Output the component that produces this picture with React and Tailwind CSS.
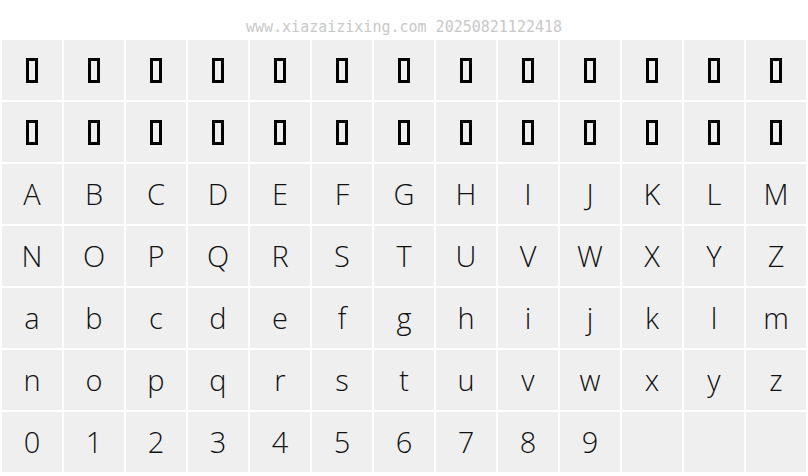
import React from 'react';

const letters = [
  ...'ABCDEFGHIJKLMNOPQRSTUVWXYZ'.split(''),
  ...'abcdefghijklmnopqrstuvwxyz'.split(''),
  ...'0123456789'.split(''),
];

const Tofu = () => (
  <span className="block w-[12px] h-[25px] border-[3px] border-black" />
);

export default function App() {
  const cells = [];
  for (let i = 0; i < 26; i++) cells.push({ key: 't' + i, tofu: true });
  letters.forEach((ch, i) => cells.push({ key: 'c' + i, ch }));
  while (cells.length < 91) cells.push({ key: 'e' + cells.length, empty: true });

  return (
    <div className="w-[808px] h-[476px] bg-white overflow-hidden">
      <div
        className="h-[40px] pt-[18px] text-center text-[15px] leading-[18px] text-[#c8c8c8]"
        style={{ fontFamily: '"DejaVu Sans Mono", "Liberation Mono", monospace' }}
      >
        www.xiazaizixing.com 20250821122418
      </div>
      <div className="grid grid-cols-[repeat(13,60px)] auto-rows-[60px] gap-[2px] pl-[2px]">
        {cells.map((c) => (
          <div
            key={c.key}
            className="bg-[#efefef] flex items-center justify-center text-[29px] font-light text-[#111]"
            style={{ fontFamily: '"Open Sans", "Lato", sans-serif' }}
          >
            {c.tofu ? <Tofu /> : c.ch}
          </div>
        ))}
      </div>
    </div>
  );
}
